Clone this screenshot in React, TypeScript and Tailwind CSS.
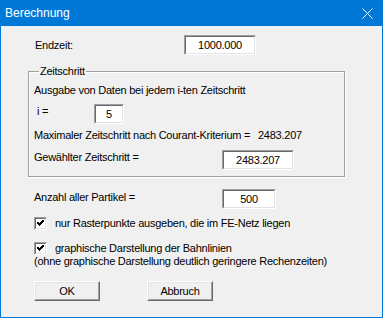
import type { ReactNode } from 'react';

const font = { fontFamily: '"Liberation Sans", Arial, sans-serif' };

// Sunken edit field like a classic Win32 EDIT control
const EditBox = ({ value, width }: { value: string; width: string }) => (
  <div className={`${width} h-[20px] border border-t-[#a0a0a0] border-l-[#a0a0a0] border-b-white border-r-white`}>
    <div className="h-full border border-t-[#696969] border-l-[#696969] border-b-[#e3e3e3] border-r-[#e3e3e3] bg-white flex items-center justify-center text-black">
      {value}
    </div>
  </div>
);

const CheckBox = () => (
  <div className="w-[13px] h-[13px] shrink-0 border border-t-[#a0a0a0] border-l-[#a0a0a0] border-b-white border-r-white">
    <div className="w-full h-full border border-t-[#696969] border-l-[#696969] border-b-[#e3e3e3] border-r-[#e3e3e3] bg-white">
      <svg width="9" height="9" viewBox="0 0 9 9" className="block">
        <path d="M1.5 3.5 L3.5 5.5 L7.5 1.5" stroke="black" strokeWidth="2" fill="none" shapeRendering="crispEdges" />
      </svg>
    </div>
  </div>
);

const Button = ({ children }: { children: ReactNode }) => (
  <div className="w-[66px] h-[20px] border border-t-white border-l-white border-b-[#696969] border-r-[#696969]">
    <div className="h-full border border-t-[#e3e3e3] border-l-[#e3e3e3] border-b-[#a0a0a0] border-r-[#a0a0a0] bg-[#f0f0f0] flex items-center justify-center text-black">
      {children}
    </div>
  </div>
);

export default function App() {
  return (
    <div
      className="w-[383px] h-[318px] bg-[#0078d7] flex flex-col text-[11px] leading-[13px] tracking-[-0.25px] text-black"
      style={font}
    >
      {/* Title bar */}
      <div className="h-[26px] shrink-0 flex items-center justify-between pl-[5px] pr-[10px] text-white text-[12px] tracking-normal">
        <span>Berechnung</span>
        <svg width="11" height="11" viewBox="0 0 11 11">
          <path d="M0.5 0.5 L10.5 10.5 M10.5 0.5 L0.5 10.5" stroke="white" strokeWidth="1" />
        </svg>
      </div>

      {/* Client area */}
      <div className="flex-1 mx-[1px] mb-[1px] bg-[#f0f0f0] flex flex-col pl-[27px]">
        <div className="mt-[9px] h-[20px] flex items-center pl-[7px]">
          <span className="w-[149px]">Endzeit:</span>
          <EditBox value="1000.000" width="w-[72px]" />
        </div>

        {/* Zeitschritt group */}
        <div className="relative mt-[16px] w-[317px] h-[106px] border border-[#a0a0a0] shadow-[inset_1px_1px_0_#fff,1px_1px_0_#fff] flex flex-col pl-[5px]">
          <span className="absolute left-[10px] top-[-7px] px-[1px] bg-[#f0f0f0]">Zeitschritt</span>
          <div className="mt-[8px] h-[20px] flex items-center">Ausgabe von Daten bei jedem i-ten Zeitschritt</div>
          <div className="mt-[4px] h-[20px] flex items-start">
            <span className="w-[60px] pl-[3px] pt-[1px]">i =</span>
            <EditBox value="5" width="w-[30px]" />
          </div>
          <div className="mt-[1px] h-[20px] flex items-center">
            <span className="w-[224px]">Maximaler Zeitschritt nach Courant-Kriterium =</span>
            <span>2483.207</span>
          </div>
          <div className="mt-[5px] h-[20px] flex items-start">
            <span className="w-[188px] pt-[1px]">Gewählter Zeitschritt =</span>
            <EditBox value="2483.207" width="w-[72px]" />
          </div>
        </div>

        <div className="mt-[12px] h-[20px] flex items-start pl-[6px]">
          <span className="w-[188px] pt-[2px]">Anzahl aller Partikel =</span>
          <EditBox value="500" width="w-[54px]" />
        </div>

        <div className="mt-[8px] h-[13px] flex items-center pl-[6px]">
          <CheckBox />
          <span className="ml-[8px]">nur Rasterpunkte ausgeben, die im FE-Netz liegen</span>
        </div>

        <div className="mt-[12px] flex flex-col pl-[6px]">
          <div className="h-[13px] flex items-center">
            <CheckBox />
            <span className="ml-[8px]">graphische Darstellung der Bahnlinien</span>
          </div>
          <span>(ohne graphische Darstellung deutlich geringere Rechenzeiten)</span>
        </div>

        <div className="mt-[13px] flex gap-[47px] pl-[6px]">
          <Button>OK</Button>
          <Button>Abbruch</Button>
        </div>
      </div>
    </div>
  );
}
